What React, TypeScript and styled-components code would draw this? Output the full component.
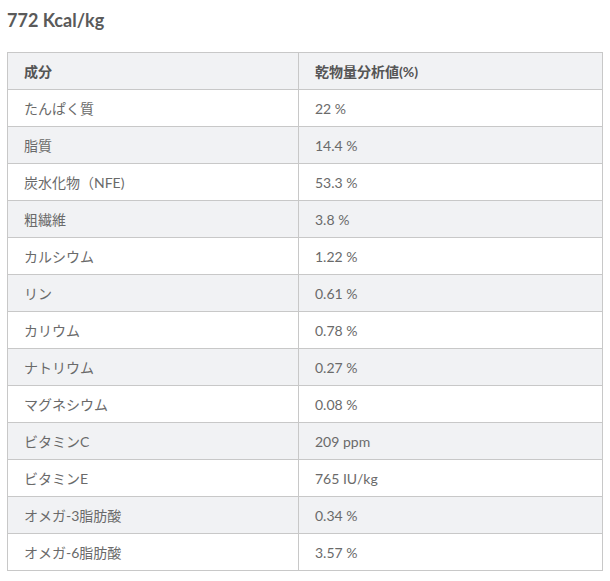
import styled, { createGlobalStyle } from "styled-components";

const GlobalStyle = createGlobalStyle`
    body {
        margin: 0;
        background: #fff;
        font-family: Lato, "Noto Sans CJK JP", sans-serif;
    }
`;

const Container = styled.div`
    padding: 8px 7px 0 7px;
    width: 596px;
`;

const Title = styled.h2`
    margin: 0 0 20px 0;
    font-size: 18px;
    line-height: 24px;
    font-weight: 700;
    color: #5a5a5a;
`;

const Table = styled.table`
    width: 596px;
    border-collapse: collapse;
    table-layout: fixed;
    font-size: 14px;
    color: #6a6a6a;
`;

const Row = styled.tr<{ striped?: boolean }>`
    background-color: ${props => (props.striped ? "#f1f2f4" : "#fff")};
`;

const HeadCell = styled.th<{ w?: string }>`
    text-align: left;
    font-weight: 700;
    color: #555;
    height: 36px;
    padding: 0 16px;
    border: 1px solid #c8c8c8;
    width: ${props => props.w || "auto"};
`;

const Cell = styled.td`
    height: 36px;
    padding: 0 16px;
    border: 1px solid #c8c8c8;
`;

interface INutrient {
    name: string,
    value: string,
}

const nutrients: INutrient[] = [
    { name: "たんぱく質", value: "22 %" },
    { name: "脂質", value: "14.4 %" },
    { name: "炭水化物（NFE)", value: "53.3 %" },
    { name: "粗繊維", value: "3.8 %" },
    { name: "カルシウム", value: "1.22 %" },
    { name: "リン", value: "0.61 %" },
    { name: "カリウム", value: "0.78 %" },
    { name: "ナトリウム", value: "0.27 %" },
    { name: "マグネシウム", value: "0.08 %" },
    { name: "ビタミンC", value: "209 ppm" },
    { name: "ビタミンE", value: "765 IU/kg" },
    { name: "オメガ-3脂肪酸", value: "0.34 %" },
    { name: "オメガ-6脂肪酸", value: "3.57 %" },
];

function App() {
    return (
        <Container>
            <GlobalStyle />
            <Title>772 Kcal/kg</Title>
            <Table>
                <thead>
                    <Row striped>
                        <HeadCell w="258px">成分</HeadCell>
                        <HeadCell>乾物量分析値(%)</HeadCell>
                    </Row>
                </thead>
                <tbody>
                    {nutrients.map((n, i) => (
                        <Row key={n.name} striped={i % 2 === 1}>
                            <Cell>{n.name}</Cell>
                            <Cell>{n.value}</Cell>
                        </Row>
                    ))}
                </tbody>
            </Table>
        </Container>
    );
}

export default App;
